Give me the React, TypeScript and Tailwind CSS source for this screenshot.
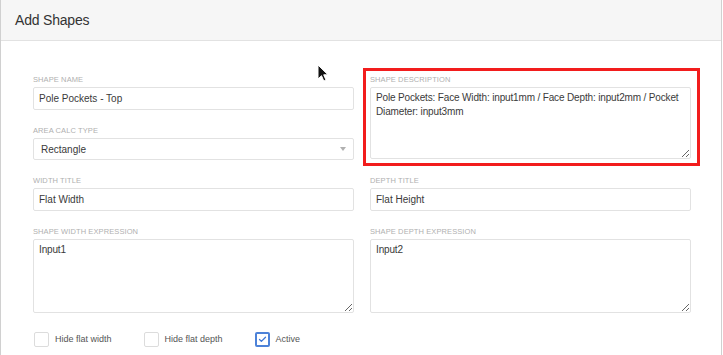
import { Check } from 'lucide-react';

const font = { fontFamily: '"Liberation Sans", Arial, sans-serif' };

function Label({ text }: { text: string }) {
    return (
        <div className="h-[10px] mb-[2px] text-[7.5px] leading-[10px] uppercase tracking-[0.1px] text-[#b0b0b0]">
            {text}
        </div>
    );
}

function TextField({ label, value }: { label: string; value: string }) {
    return (
        <div>
            <Label text={label} />
            <input
                readOnly
                defaultValue={value}
                className="block w-full h-[23px] px-[5px] border border-[#e2e2e2] rounded-[2px] bg-white text-[10px] text-[#3a3a3a] outline-none"
                style={font}
            />
        </div>
    );
}

function AreaField({ label, value, height }: { label: string; value: string; height: string }) {
    return (
        <div>
            <Label text={label} />
            <textarea
                readOnly
                defaultValue={value}
                className={`block w-full ${height} pl-[5px] pr-0 pt-[3px] border border-[#e2e2e2] rounded-[2px] bg-white text-[10px] leading-[14px] tracking-[-0.15px] text-[#3a3a3a] outline-none resize overflow-hidden`}
                style={font}
            />
        </div>
    );
}

function Box({ label, checked }: { label: string; checked?: boolean }) {
    return (
        <div className="flex items-center gap-[6px]">
            <div
                className={`w-[15px] h-[15px] rounded-[2px] bg-white flex items-center justify-center ${
                    checked ? 'border-2 border-[#4d82d8]' : 'border-[1.5px] border-[#dcdcdc]'
                }`}
            >
                {checked && <Check className="w-[9px] h-[9px] text-[#3f78d6]" strokeWidth={3.5} />}
            </div>
            <span className="text-[9px] text-[#555]">{label}</span>
        </div>
    );
}

export default function App() {
    return (
        <div className="relative w-[722px] h-[355px] bg-white border-x border-[#d0d0d0] overflow-hidden" style={font}>
            {/* Header */}
            <div className="h-[41px] bg-[#f6f6f6] border-b border-[#e2e2e2] flex items-center pl-[14px]">
                <span className="text-[14px] text-[#333] tracking-[-0.2px]">Add Shapes</span>
            </div>

            {/* Form */}
            <div className="pl-[32px] pr-[30px] pt-[34px]">
                <div className="grid grid-cols-2 gap-x-4">
                    <div className="flex flex-col gap-4">
                        <TextField label="Shape Name" value="Pole Pockets - Top" />
                        <div>
                            <Label text="Area Calc Type" />
                            <div className="h-[22px] px-[7px] border border-[#e2e2e2] rounded-[2px] bg-white flex items-center justify-between">
                                <span className="text-[10px] text-[#3a3a3a]">Rectangle</span>
                                <svg width="6" height="4" viewBox="0 0 6 4">
                                    <path d="M0 0h6L3 4z" fill="#b0b0b0" />
                                </svg>
                            </div>
                        </div>
                    </div>
                    <div className="relative">
                        <AreaField
                            label="Shape Description"
                            value="Pole Pockets: Face Width: input1mm / Face Depth: input2mm / Pocket Diameter: input3mm"
                            height="h-[72px]"
                        />
                        {/* red highlight */}
                        <div className="absolute -left-[7px] -right-[9px] -top-[7px] -bottom-[6px] border-[3px] border-[#f21d1d] pointer-events-none" />
                    </div>
                </div>

                <div className="grid grid-cols-2 gap-x-4 mt-4">
                    <TextField label="Width Title" value="Flat Width" />
                    <TextField label="Depth Title" value="Flat Height" />
                </div>

                <div className="grid grid-cols-2 gap-x-4 mt-4">
                    <AreaField label="Shape Width Expression" value="Input1" height="h-[74px]" />
                    <AreaField label="Shape Depth Expression" value="Input2" height="h-[74px]" />
                </div>

                <div className="flex items-center gap-[32px] mt-[19px] pl-[1px]">
                    <Box label="Hide flat width" />
                    <Box label="Hide flat depth" />
                    <Box label="Active" checked />
                </div>
            </div>

            {/* mouse pointer */}
            <svg className="absolute left-[316px] top-[64px]" width="12" height="18" viewBox="0 0 12 18">
                <path d="M1 1v14l3.5-3.3 2.3 5.3 2.2-1-2.3-5.2H11z" fill="#111" stroke="#fff" strokeWidth="1" />
            </svg>
        </div>
    );
}
